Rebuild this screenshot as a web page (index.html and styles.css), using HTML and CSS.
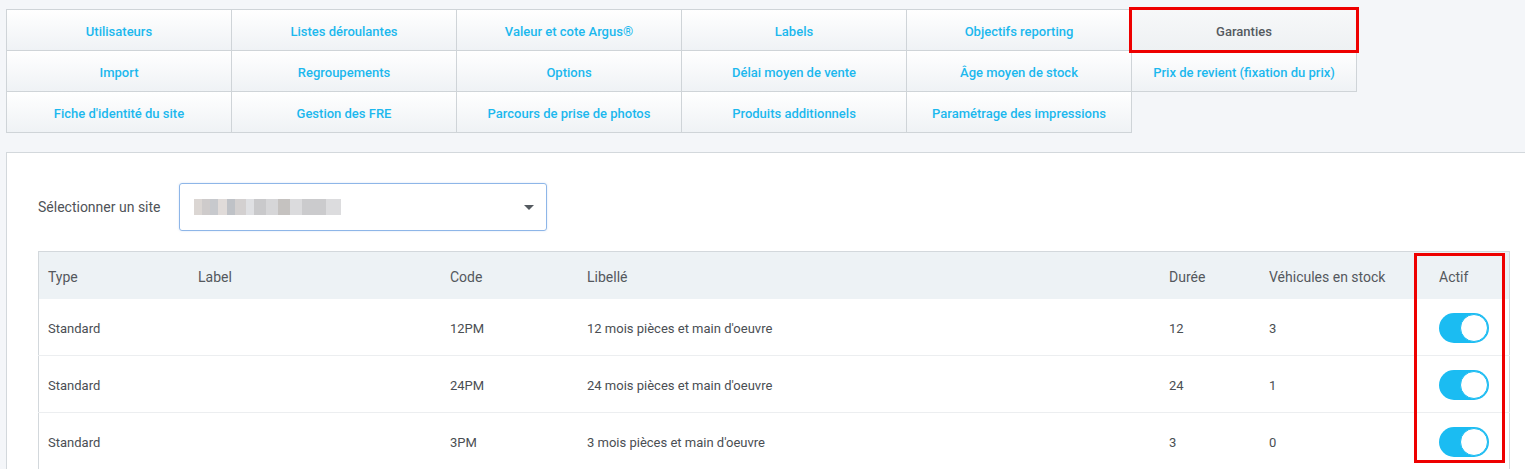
FILE: index.html
```html
<!DOCTYPE html>
<html>
<head>
    <title>Paramètres - Garanties</title>
    <link rel="stylesheet" href="styles.css">
</head>
<body>
    <div class="tabs">
        <a class="tab">Utilisateurs</a>
        <a class="tab">Listes déroulantes</a>
        <a class="tab">Valeur et cote Argus®</a>
        <a class="tab">Labels</a>
        <a class="tab">Objectifs reporting</a>
        <a class="tab active">Garanties</a>
        <a class="tab">Import</a>
        <a class="tab">Regroupements</a>
        <a class="tab">Options</a>
        <a class="tab">Délai moyen de vente</a>
        <a class="tab">Âge moyen de stock</a>
        <a class="tab">Prix de revient (fixation du prix)</a>
        <a class="tab">Fiche d'identité du site</a>
        <a class="tab">Gestion des FRE</a>
        <a class="tab">Parcours de prise de photos</a>
        <a class="tab">Produits additionnels</a>
        <a class="tab">Paramétrage des impressions</a>
    </div>

    <div class="panel">
        <div class="site-row">
            <label class="site-label">Sélectionner un site</label>
            <div class="select">
                <span class="blurred"></span>
                <span class="caret"></span>
            </div>
        </div>

        <div class="table-wrap">
            <table class="grid">
                <thead>
                    <tr>
                        <th class="c-type">Type</th>
                        <th class="c-label">Label</th>
                        <th class="c-code">Code</th>
                        <th class="c-lib">Libellé</th>
                        <th class="c-duree">Durée</th>
                        <th class="c-stock">Véhicules en stock</th>
                        <th class="c-actif">Actif</th>
                    </tr>
                </thead>
                <tbody>
                    <tr>
                        <td>Standard</td>
                        <td></td>
                        <td>12PM</td>
                        <td>12 mois pièces et main d'oeuvre</td>
                        <td>12</td>
                        <td>3</td>
                        <td><span class="switch"></span></td>
                    </tr>
                    <tr>
                        <td>Standard</td>
                        <td></td>
                        <td>24PM</td>
                        <td>24 mois pièces et main d'oeuvre</td>
                        <td>24</td>
                        <td>1</td>
                        <td><span class="switch"></span></td>
                    </tr>
                    <tr>
                        <td>Standard</td>
                        <td></td>
                        <td>3PM</td>
                        <td>3 mois pièces et main d'oeuvre</td>
                        <td>3</td>
                        <td>0</td>
                        <td><span class="switch"></span></td>
                    </tr>
                </tbody>
            </table>
            <div class="highlight"></div>
        </div>
    </div>
</body>
</html>
```

FILE: styles.css
```css
body {
    margin: 0;
    padding: 9px 0 0 6px;
    background-color: #f4f6f9;
    font-family: Roboto, "Liberation Sans", sans-serif;
    color: #505458;
    overflow: hidden;
}

.tabs {
    display: grid;
    grid-template-columns: repeat(6, 225px);
    grid-auto-rows: 41px;
}

.tab {
    display: flex;
    align-items: center;
    justify-content: center;
    padding-top: 2px;
    margin: 0 -1px -1px 0;
    border: 1px solid #cfd4d8;
    background: linear-gradient(#ffffff, #eff2f5);
    color: #1cb8ee;
    font-size: 13px;
    font-weight: 500;
    cursor: pointer;
}

.tab.active {
    position: relative;
    background: linear-gradient(#f7f8f9, #eef1f3);
    color: #555a60;
    outline: 3px solid #ee0000;
    outline-offset: -1px;
    z-index: 1;
}

.panel {
    margin-top: 20px;
    padding: 30px 0 0 31px;
    background-color: #fff;
    border-top: 1px solid #d3d8dc;
    border-left: 1px solid #d3d8dc;
    height: 400px;
}

.site-row {
    display: flex;
    align-items: center;
}

.site-label {
    font-size: 14px;
    color: #4f5358;
    width: 141px;
}

.select {
    display: flex;
    align-items: center;
    justify-content: space-between;
    box-sizing: border-box;
    width: 368px;
    height: 48px;
    padding: 0 12px 0 14px;
    border: 1px solid #8eb6e8;
    border-radius: 3px;
    box-shadow: 0 0 2px rgba(80, 140, 220, 0.25);
}

.blurred {
    width: 147px;
    height: 16px;
    background:
        linear-gradient(90deg, #d8d2cf 0 8px, #c9c6c6 8px 16px, #c2c4c8 16px 24px, #ddd8d5 24px 33px, #b9bcc2 33px 41px, #cfcccc 41px 52px, #dcdde0 52px 60px, #c4c4c6 60px 72px, #d2d2d4 72px 84px, #bfbcba 84px 96px, #d8d8da 96px 108px, #c6c6c8 108px 132px, #d9d9db 132px 147px);
    filter: blur(0.6px);
    opacity: 0.9;
}

.caret {
    width: 0;
    height: 0;
    border-left: 5px solid transparent;
    border-right: 5px solid transparent;
    border-top: 5px solid #555a60;
}

.table-wrap {
    position: relative;
    margin-top: 20px;
    width: 1472px;
}

.grid {
    width: 100%;
    border-collapse: collapse;
    border-left: 1px solid #d3d8dc;
    border-right: 1px solid #d3d8dc;
    border-top: 1px solid #d3d8dc;
    table-layout: fixed;
}

.grid th {
    height: 45px;
    padding: 2px 9px 0;
    background-color: #edf2f5;
    font-size: 14px;
    font-weight: normal;
    text-align: left;
    color: #54585d;
}

.grid td {
    height: 54px;
    padding: 2px 9px 0;
    font-size: 13px;
    color: #4a4e53;
    border-bottom: 1px solid #eceef0;
}

.c-type { width: 132px; }
.c-label { width: 234px; }
.c-code { width: 119px; }
.c-lib { width: 564px; }
.c-duree { width: 82px; }
.c-stock { width: 152px; }

.switch {
    position: relative;
    display: block;
    width: 50px;
    height: 30px;
    border-radius: 15px;
    background-color: #1bbcf2;
}

.switch::after {
    content: "";
    position: absolute;
    top: 1px;
    right: 1px;
    width: 26px;
    height: 26px;
    border-radius: 50%;
    background-color: #fff;
    border: 1px solid #1bbcf2;
}

.highlight {
    position: absolute;
    left: 1376px;
    top: 2px;
    width: 85px;
    height: 204px;
    border: 3px solid #ee0000;
}
```
